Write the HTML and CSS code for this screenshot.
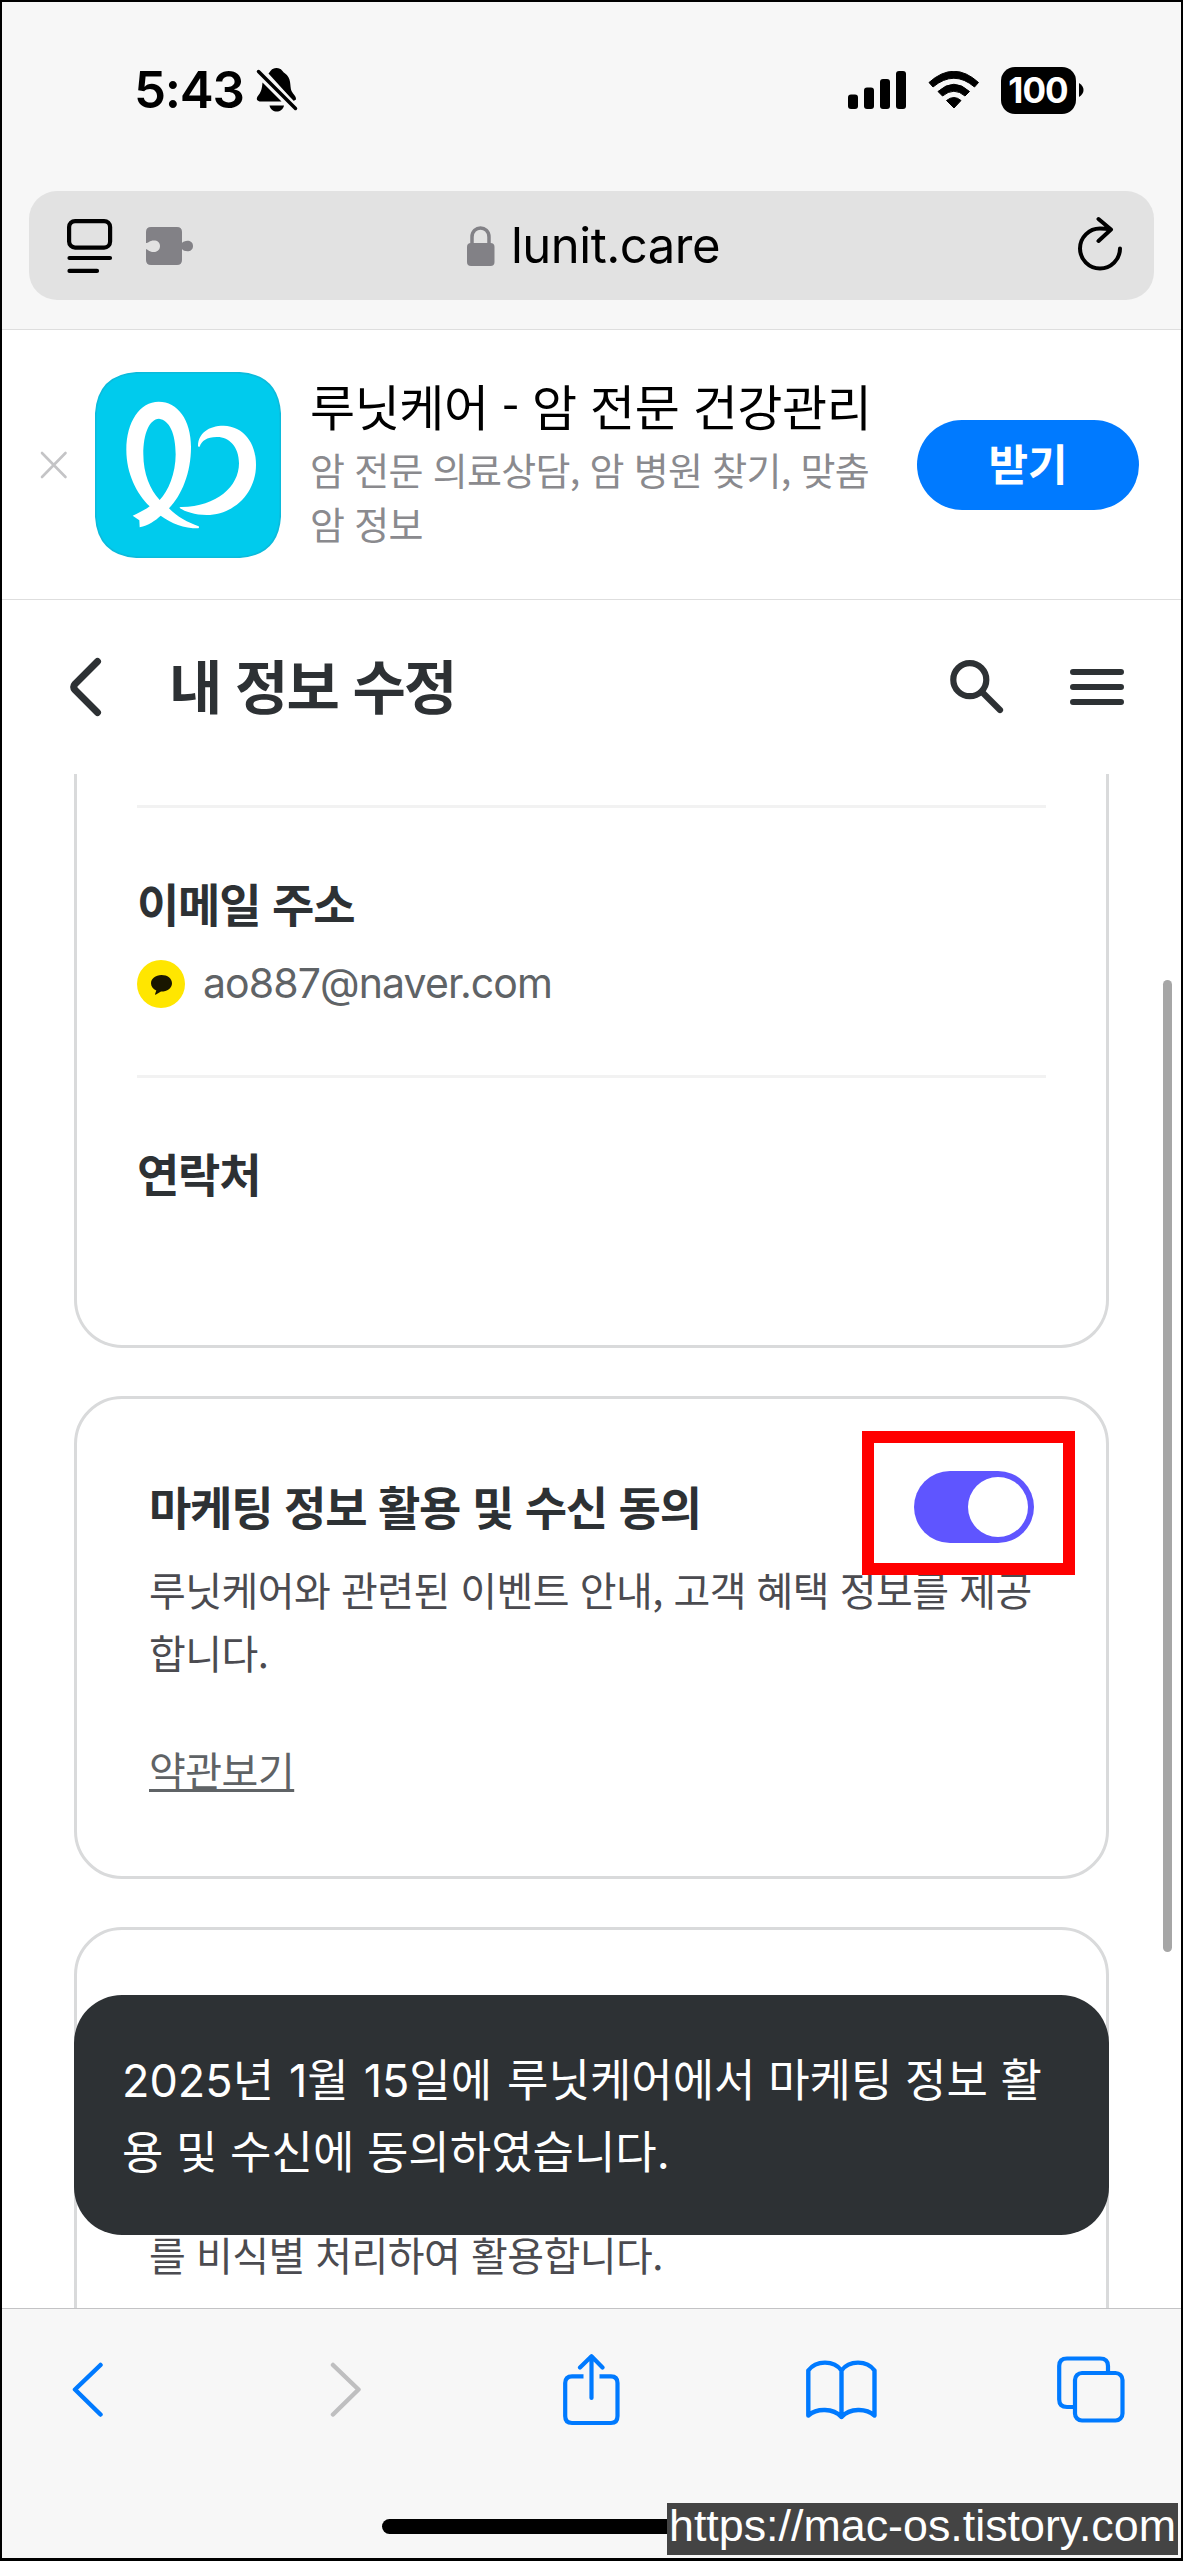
FILE: index.html
```html
<!DOCTYPE html>
<html lang="ko">
<head>
<meta charset="utf-8">
<title>내 정보 수정</title>
<link rel="stylesheet" href="styles.css">
</head>
<body>
<div class="screen">
  <header class="browser">
    <div class="status">
      <span class="time">5:43</span>
      <svg class="bell" width="42" height="44" viewBox="0 0 42 44"><path d="M5 33.500C1 33.500 0 31 1.500 28.500C5.500 24 6 20 6.500 14.500L25.500 33.500ZM12.500 5.500C14.500 4 15 0 20.500 0C26 0 26.500 4 28.500 5C36 10 33.500 18 35.500 23C37 26 40.500 28.500 40 31.500L37.500 33Z" fill="#000"/><path d="M13.500 37.500H28C27 41.500 24 43.500 20.700 43.500C17.500 43.500 14.500 41.500 13.500 37.500Z"/><path d="M3 4L39.500 40.500" stroke="#f7f7f7" stroke-width="8"/><path d="M2.500 3.500L39.500 40.500" stroke="#000" stroke-width="3.500" stroke-linecap="round"/></svg>
      <svg class="signal" width="58" height="38" viewBox="0 0 58 38"><rect y="23.500" width="10" height="14.500" rx="3"/><rect x="16" y="16.500" width="10" height="21.500" rx="3"/><rect x="32" y="8" width="10" height="30" rx="3"/><rect x="48" width="10" height="38" rx="3"/></svg>
      <svg class="wifi" width="52" height="38" viewBox="0 0 52 38"><path d="M1 11.500Q26 -11 50.500 11.500L46.500 16Q26 -1.500 5 16Z" stroke="#000" stroke-width="1" stroke-linejoin="round"/><path d="M10 20.500Q26 6 41.500 20.500L37 25Q26 15.500 14.500 25Z" stroke="#000" stroke-width="1" stroke-linejoin="round"/><path d="M18.500 29.500Q26 23.500 33 29.500L26 37Z" stroke="#000" stroke-width="1" stroke-linejoin="round"/></svg>
      <span class="battery">100</span>
      <svg class="nub" width="5" height="14" viewBox="0 0 5 14"><path d="M0 0Q4.500 3 4.500 7T0 14Z"/></svg>
    </div>
    <div class="address">
      <svg class="reader" width="46" height="54" viewBox="0 0 46 54" fill="none" stroke="#000" stroke-width="4.200" stroke-linecap="round"><rect x="2.100" y="2.100" width="41" height="26.500" rx="6"/><path d="M2.500 39H43M2.500 51.900H30"/></svg>
      <svg class="puzzle" width="48" height="40" viewBox="0 0 48 40"><path d="M5 1H31Q36 1 36 6V17C38 14 47 13 47 20C47 27 38 26 36 23V34Q36 39 31 39H5Q0 39 0 34V23C3 24 3 26 8 26C11.500 26 14 23.500 14 20C14 16.500 11.500 14.500 8 14.500C3 14.500 3 17 0 17V6Q0 1 5 1Z" fill="#828186"/></svg>
      <svg class="lock" width="28" height="40" viewBox="0 0 28 40"><rect y="17" width="27.500" height="23" rx="4" fill="#828186"/><path d="M5 18V11C5 -1 22 -1 22 11V18" fill="none" stroke="#828186" stroke-width="3.500"/></svg>
      <span class="domain">lunit.care</span>
      <svg class="reload" width="46" height="56" viewBox="0 0 46 56" fill="none" stroke="#000" stroke-width="4" stroke-linecap="round" stroke-linejoin="round"><path d="M43 32.500A20 20 0 1 1 23 12.500C27 12.500 30 12.700 33.500 13.500M21.500 3L34 13.500L21.500 25"/></svg>
    </div>
  </header>

  <section class="banner">
    <svg class="close" width="28" height="28" viewBox="0 0 28 28"><path d="M2 2L25.500 26M25.500 2L2 26" stroke="#c4c4c6" stroke-width="2.600" stroke-linecap="round"/></svg>
    <svg class="logo" width="186" height="186" viewBox="15 21 558 558"><path d="M155 23H433Q571 23 571 161V439Q571 577 433 577H155Q17 577 17 439V161Q17 23 155 23Z" fill="#00cbed" stroke="#0bbbdc" stroke-width="5"/><path fill="#fff" fill-rule="evenodd" d="M206 110C150 110 109 170 109 255C109 325 140 387 179 424C165 435 145 444 128 452L148 466L149 487C175 481 196 467 212 452C245 475 280 490 325 490Q329 488 326 484C295 473 260 455 237 430C275 390 303 325 303 245C303 165 263 110 206 110ZM207 161C238 165 257 205 257 268C257 325 235 379 209 405C180 375 160 325 160 268C160 205 178 163 207 161Z"/><path fill="#fff" d="M324 242C325 205 355 182 401 182C460 184 498 232 498 300C498 386 430 450 350 450C315 450 285 440 269 429Q268 425 275 426C380 425 447 365 447 295C447 245 417 215 380 216C350 216 335 228 329 245Q325 247 324 242Z"/></svg>
    <div class="app">
      <div class="app-name">루닛케어 - 암 전문 건강관리</div>
      <div class="app-desc">암 전문 의료상담, 암 병원 찾기, 맞춤<br>암 정보</div>
    </div>
    <button class="get">받기</button>
  </section>

  <nav class="title-bar">
    <svg class="back" width="34" height="60" viewBox="0 0 34 60"><path d="M28.500 4.500L6 27Q3.500 30 6 33L28.500 55.500" fill="none" stroke="#2d3134" stroke-width="7" stroke-linecap="round"/></svg>
    <h1>내 정보 수정</h1>
    <svg class="search" width="54" height="54" viewBox="0 0 54 54" fill="none" stroke="#2d3134" stroke-width="6.200" stroke-linecap="round"><circle cx="19.800" cy="19.700" r="16.500"/><path d="M32 32L50 50"/></svg>
    <svg class="menu" width="54" height="36" viewBox="0 0 54 36"><path d="M3 3H51M3 18H51M3 33H51" stroke="#2d3134" stroke-width="6" stroke-linecap="round"/></svg>
  </nav>

  <main class="page">
    <section class="card contact">
      <hr>
      <h2>이메일 주소</h2>
      <div class="email">
        <svg width="48" height="48" viewBox="0 0 48 48"><circle cx="24" cy="24" r="24" fill="#ffe600"/><path d="M24.500 15C18.500 15 14 18.700 14 23.200C14 26.400 16 29.200 19.300 30.500L18 34.200Q18.200 35 19 34.500L24 31.500C30.500 31.500 35 28 35 23.200S30.500 15 24.500 15Z" fill="#191600"/></svg>
        <span>ao887@naver.com</span>
      </div>
      <hr>
      <h2>연락처</h2>
    </section>
    <section class="card marketing">
      <div class="card-head">
        <h2>마케팅 정보 활용 및 수신 동의</h2>
        <div class="toggle"><span class="knob"></span></div>
      </div>
      <p>루닛케어와 관련된 이벤트 안내, 고객 혜택 정보를 제공<br>합니다.</p>
      <a class="terms">약관보기</a>
    </section>
    <section class="card research"><p>를 비식별 처리하여 활용합니다.</p></section>
    <div class="highlight"></div>
    <div class="toast"><span class="date">2025년 1월 15일에 </span>루닛케어에서 마케팅 정보 활<br>용 및 수신에 동의하였습니다.</div>
    <div class="scrollbar"></div>
  </main>

  <footer class="toolbar">
    <div class="actions">
      <svg class="prev" width="32" height="56" viewBox="0 0 32 56"><path d="M28.500 3L3 27.500L28.500 52.500" fill="none" stroke="#007aff" stroke-width="4.500" stroke-linecap="round" stroke-linejoin="round"/></svg>
      <svg class="next" width="32" height="56" viewBox="0 0 32 56"><path d="M3 3L28.500 27.500L3 52.500" fill="none" stroke="#bfbfc0" stroke-width="4.500" stroke-linecap="round" stroke-linejoin="round"/></svg>
      <svg class="share" width="57" height="72" viewBox="0 0 57 72" fill="none" stroke="#007aff" stroke-width="4.200" stroke-linecap="round" stroke-linejoin="round"><path d="M20.500 22.300H9Q2.200 22.300 2.200 29V62Q2.200 69 9 69H48Q54.500 69 54.500 62V29Q54.500 22.300 48 22.300H36.500" stroke-linecap="butt"/><path d="M28.500 44V2.500M17 13.500L28.500 2.300L39.500 13.500"/></svg>
      <svg class="book" width="71" height="60" viewBox="0 0 71 60" fill="none" stroke="#007aff" stroke-width="4.400" stroke-linecap="round" stroke-linejoin="round"><path d="M35.500 57V10.500C28 0 10 0 2.300 10.500V55.500C11 48 27 48 35.500 57C44 48 60 48 68.500 55.500V10.500C61 0 43 0 35.500 10.500"/></svg>
      <svg class="tabs" width="68" height="67" viewBox="0 0 68 67" fill="none" stroke="#007aff" stroke-width="4.200"><path d="M16 51H10Q2.200 51 2.200 43.500V10Q2.200 2.500 10 2.500H43Q51 2.500 51 10V16"/><rect x="18" y="17" width="47.500" height="47.500" rx="7"/></svg>
    </div>
    <div class="home"></div>
  </footer>
  <div class="watermark">https://mac-os.tistory.com</div>
</div>
</body>
</html>
```
FILE: styles.css
```css
* { box-sizing: border-box; }
body { margin: 0; background: #fff; }
h1, h2, p { margin: 0; }
svg { display: block; flex: none; }

.screen {
  position: relative;
  display: flex;
  flex-direction: column;
  width: 1183px;
  height: 2561px;
  overflow: hidden;
  border: 2px solid #000;
  border-bottom-width: 3px;
  background: #fff;
  font-family: "Noto Sans CJK KR", sans-serif;
  color: #2d3134;
  white-space: nowrap;
}

/* Status row and address field */
.browser { flex: none; height: 328px; background: #f7f7f7; border-bottom: 1px solid #dedede; }
.status { display: flex; align-items: center; height: 176px; padding-left: 132px; }
.time { width: 122px; font: 600 51px/60px Inter, sans-serif; letter-spacing: -1.3px; color: #000; }
.signal { margin-left: 550px; }
.wifi { margin-left: 22px; }
.battery {
  width: 75px;
  height: 47px;
  margin-left: 21px;
  border-radius: 14px;
  background: #000;
  color: #fff;
  font: 700 35px/47px Inter, sans-serif;
  letter-spacing: -1px;
  text-indent: -1px;
  text-align: center;
}
.nub { margin-left: 3px; }
.address {
  display: flex;
  align-items: center;
  height: 109px;
  margin: 13px 27px 0;
  padding-left: 38px;
  border-radius: 28px;
  background: #e2e2e2;
}
.puzzle { margin-left: 33px; }
.lock { margin-left: 273px; }
.domain { width: 582px; padding-left: 16px; font: 400 49px/60px Inter, sans-serif; letter-spacing: -0.5px; color: #000; }
.reload { margin-bottom: 4px; }

/* App install banner */
.banner { display: flex; flex: none; align-items: center; height: 270px; padding-left: 38px; border-bottom: 1px solid #dedede; }
.logo { margin-left: 27px; }
.app { width: 604px; padding: 0 0 8px 29px; }
.app-name { margin-bottom: 4px; font-size: 49px; line-height: 66px; letter-spacing: -0.4px; color: #000; }
.app-desc { font-size: 38px; line-height: 54px; letter-spacing: -0.7px; color: #8a8a8e; }
.get {
  width: 222px;
  height: 90px;
  margin-left: 32px;
  padding: 0 0 6px;
  border: 0;
  border-radius: 45px;
  background: #007aff;
  color: #fff;
  font: 700 43px/80px "Noto Sans CJK KR", sans-serif;
}

/* Page title */
.title-bar { display: flex; flex: none; align-items: center; height: 174px; padding-left: 67px; }
h1 { width: 849px; padding: 0 0 6px 66px; font-size: 58px; line-height: 80px; letter-spacing: -1.8px; }
.search { margin-left: -2px; }
.menu { margin-left: 66px; }

/* Scrolled content */
.page { position: relative; flex: none; height: 1534px; padding: 0 72px; overflow: hidden; }
.card { border: 3px solid #d9dadb; border-radius: 48px; }
.card + .card { margin-top: 48px; }
.contact { height: 574px; padding: 31px 60px 0; border-top: 0; border-radius: 0 0 48px 48px; }
hr { height: 3px; margin: 0; border: 0; background: #f2f2f2; }
h2 { font-size: 46px; line-height: 60px; letter-spacing: -1.2px; }
hr + h2 { margin-top: 64px; }
.email { display: flex; align-items: center; gap: 18px; height: 48px; margin: 28px 0 67px; font: 400 41px/46px Inter, sans-serif; letter-spacing: -0.9px; color: #5f6366; }
.email span { padding-bottom: 2px; }
.marketing { height: 483px; padding: 72px 72px 0; }
.card-head { display: flex; align-items: center; justify-content: space-between; height: 72px; }
.card-head h2 { padding-bottom: 4px; }
.toggle { display: flex; justify-content: flex-end; width: 120px; height: 72px; padding: 6px; border-radius: 36px; background: #5f55ff; }
.knob { width: 60px; height: 60px; border-radius: 50%; background: #fff; }
p { font-size: 40px; line-height: 63px; letter-spacing: -0.55px; color: #4b4b50; }
.marketing p { margin-top: 15px; }
.terms {
  display: inline-block;
  margin-top: 54px;
  font-size: 40px;
  line-height: 63px;
  letter-spacing: -0.5px;
  color: #5f6366;
  text-decoration: underline;
  text-decoration-thickness: 3px;
  text-decoration-skip-ink: none;
  text-underline-offset: 3px;
}
.research { height: 500px; padding: 293px 72px 0; }

/* Layers over the content */
.highlight { position: absolute; left: 860px; top: 657px; width: 213px; height: 144px; border: 12px solid #f00; }
.toast {
  position: absolute;
  left: 72px;
  top: 1221px;
  width: 1035px;
  height: 240px;
  padding: 50px 48px 0;
  border-radius: 48px;
  background: #2d3134;
  color: #fff;
  font-family: Inter, "Noto Sans CJK KR", sans-serif;
  font-size: 45px;
  line-height: 72px;
}
.date { word-spacing: 2.3px; }
.scrollbar { position: absolute; right: 9px; top: 206px; width: 9px; height: 972px; border-radius: 5px; background: #a6a6a6; }

/* Bottom toolbar */
.toolbar { height: 250px; border-top: 1px solid #c3c3c5; background: #f7f7f7; }
.actions { display: flex; align-items: center; height: 161px; padding-left: 70px; }
.next { margin-left: 226px; }
.share { margin-left: 201px; }
.book { margin-left: 186px; }
.tabs { margin-left: 180px; }
.home { width: 419px; height: 15px; margin: 49px auto 0; border-radius: 8px; background: #000; }
.watermark {
  position: absolute;
  right: 3px;
  bottom: 3px;
  width: 511px;
  height: 52px;
  background: #444;
  color: #fff;
  font: 44.8px/44px "Liberation Sans", sans-serif;
  text-align: center;
}
```
